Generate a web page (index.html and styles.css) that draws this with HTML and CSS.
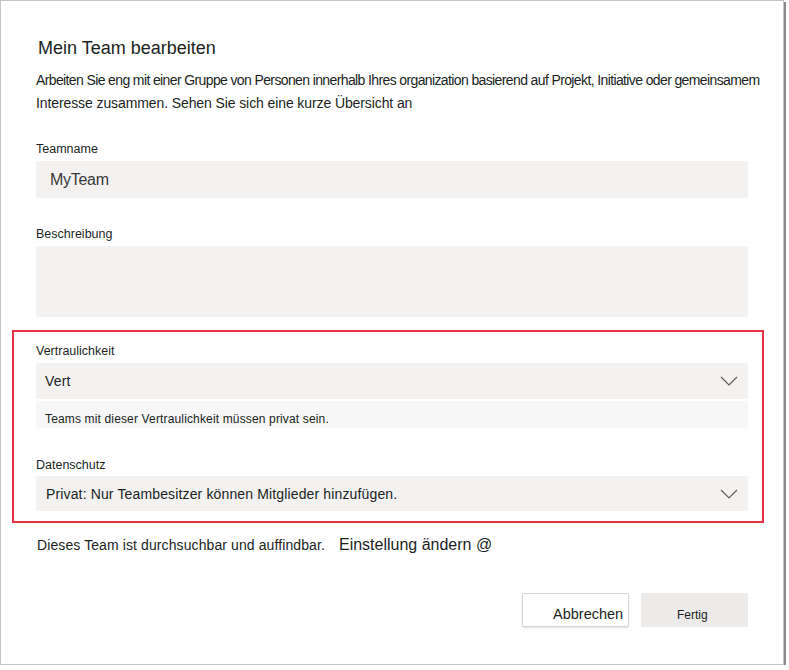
FILE: index.html
```html
<!doctype html>
<html lang="de">
<head>
    <meta charset="UTF-8">
    <title>Mein Team bearbeiten</title>
    <link rel="stylesheet" href="styles.css">
</head>
<body>

<div class="dialog">
    <h1 class="title">Mein Team bearbeiten</h1>
    <p class="intro"><span class="intro-first">Arbeiten Sie eng mit einer Gruppe von Personen innerhalb Ihres organization basierend auf Projekt, Initiative oder gemeinsamem</span><br>Interesse zusammen. Sehen Sie sich eine kurze Übersicht an</p>

    <div class="label label-first">Teamname</div>
    <div class="field field-name">MyTeam</div>

    <div class="label">Beschreibung</div>
    <div class="field field-desc"></div>

    <div class="highlight">
        <div class="label label-top">Vertraulichkeit</div>
        <div class="field select select-first">
            <span class="select-text">Vert</span>
            <svg class="chevron" width="18" height="10" viewBox="0 0 18 10">
                <path d="M1 1 L9 9 L17 1" fill="none" stroke="#605e5c" stroke-width="1.2"/>
            </svg>
        </div>
        <div class="info">Teams mit dieser Vertraulichkeit müssen privat sein.</div>

        <div class="label">Datenschutz</div>
        <div class="field select select-second">
            <span class="select-text">Privat: Nur Teambesitzer können Mitglieder hinzufügen.</span>
            <svg class="chevron" width="18" height="10" viewBox="0 0 18 10">
                <path d="M1 1 L9 9 L17 1" fill="none" stroke="#605e5c" stroke-width="1.2"/>
            </svg>
        </div>
    </div>

    <div class="note">
        <span class="note-text">Dieses Team ist durchsuchbar und auffindbar.</span>
        <span class="note-link">Einstellung ändern @</span>
    </div>

    <div class="actions">
        <div class="btn btn-cancel">Abbrechen</div>
        <div class="btn btn-done">Fertig</div>
    </div>
</div>

</body>
</html>
```
FILE: styles.css
```css
* {
    padding: 0;
    margin: 0;
    box-sizing: border-box;
}

body {
    background-color: #ffffff;
    font-family: "Liberation Sans", Arial, sans-serif;
    color: #201f1e;
}

.dialog {
    width: 784px;
    height: 665px;
    border: 1px solid #c4c4c4;
    box-shadow: 2px 2px 0 #8c8c8c;
    padding: 35px 35px 0 35px;
    background-color: #ffffff;
}

.title {
    font-size: 18px;
    font-weight: normal;
    line-height: 24px;
    margin-left: 2px;
}

/* the intro text runs a little past the form fields */
.intro {
    margin: 9px -30px 0 0;
    font-size: 14px;
    line-height: 23px;
    letter-spacing: -0.1px;
    white-space: nowrap;
}

.intro-first {
    letter-spacing: -0.62px;
}

.label {
    margin-top: 28px;
    font-size: 12.5px;
    line-height: 16px;
}

.label-first {
    margin-top: 26px;
}

.field {
    margin-top: 4px;
    background-color: #f3f2f1;
    border-radius: 3px;
}

.field-name {
    height: 37px;
    padding-left: 14px;
    font-size: 16px;
    line-height: 37px;
    letter-spacing: -0.3px;
    color: #3b3a39;
}

.field-desc {
    height: 71px;
}

.highlight {
    margin: 13px -16px 0 -24px;
    border: 2px solid #e8323f;
    padding: 11px 14px 10px 22px;
}

.highlight .label-top {
    margin-top: 0;
}

.select {
    display: flex;
    align-items: center;
    justify-content: space-between;
    padding: 0 10px 0 9px;
    font-size: 14px;
}

.select-first {
    margin-top: 4px;
    height: 36px;
}

.select-second {
    margin-top: 3px;
    height: 35px;
    padding-left: 10px;
}

.select-text {
    letter-spacing: 0.14px;
}

.info {
    margin-top: 2px;
    height: 27px;
    padding: 10px 0 0 9px;
    background-color: #f7f7f7;
    font-size: 12px;
    line-height: 16px;
    letter-spacing: 0.15px;
}

.highlight .info + .label {
    margin-top: 29px;
}

.note {
    margin-top: 12px;
    display: flex;
    align-items: center;
    gap: 14px;
    height: 20px;
    padding-left: 1px;
}

.note-text {
    font-size: 14px;
    letter-spacing: 0.1px;
}

.note-link {
    font-size: 16px;
}

.actions {
    margin-top: 38px;
    display: flex;
    justify-content: flex-end;
    gap: 12px;
}

.btn {
    width: 107px;
    height: 34px;
    border-radius: 2px;
    line-height: 24px;
}

.btn-cancel {
    border: 1px solid #d6d6d6;
    box-shadow: 0 1px 2px rgba(0, 0, 0, 0.12);
    padding: 8px 0 0 30px;
    font-size: 14.5px;
}

.btn-done {
    background-color: #edebe9;
    padding: 10px 0 0 36px;
    font-size: 12px;
}
```
